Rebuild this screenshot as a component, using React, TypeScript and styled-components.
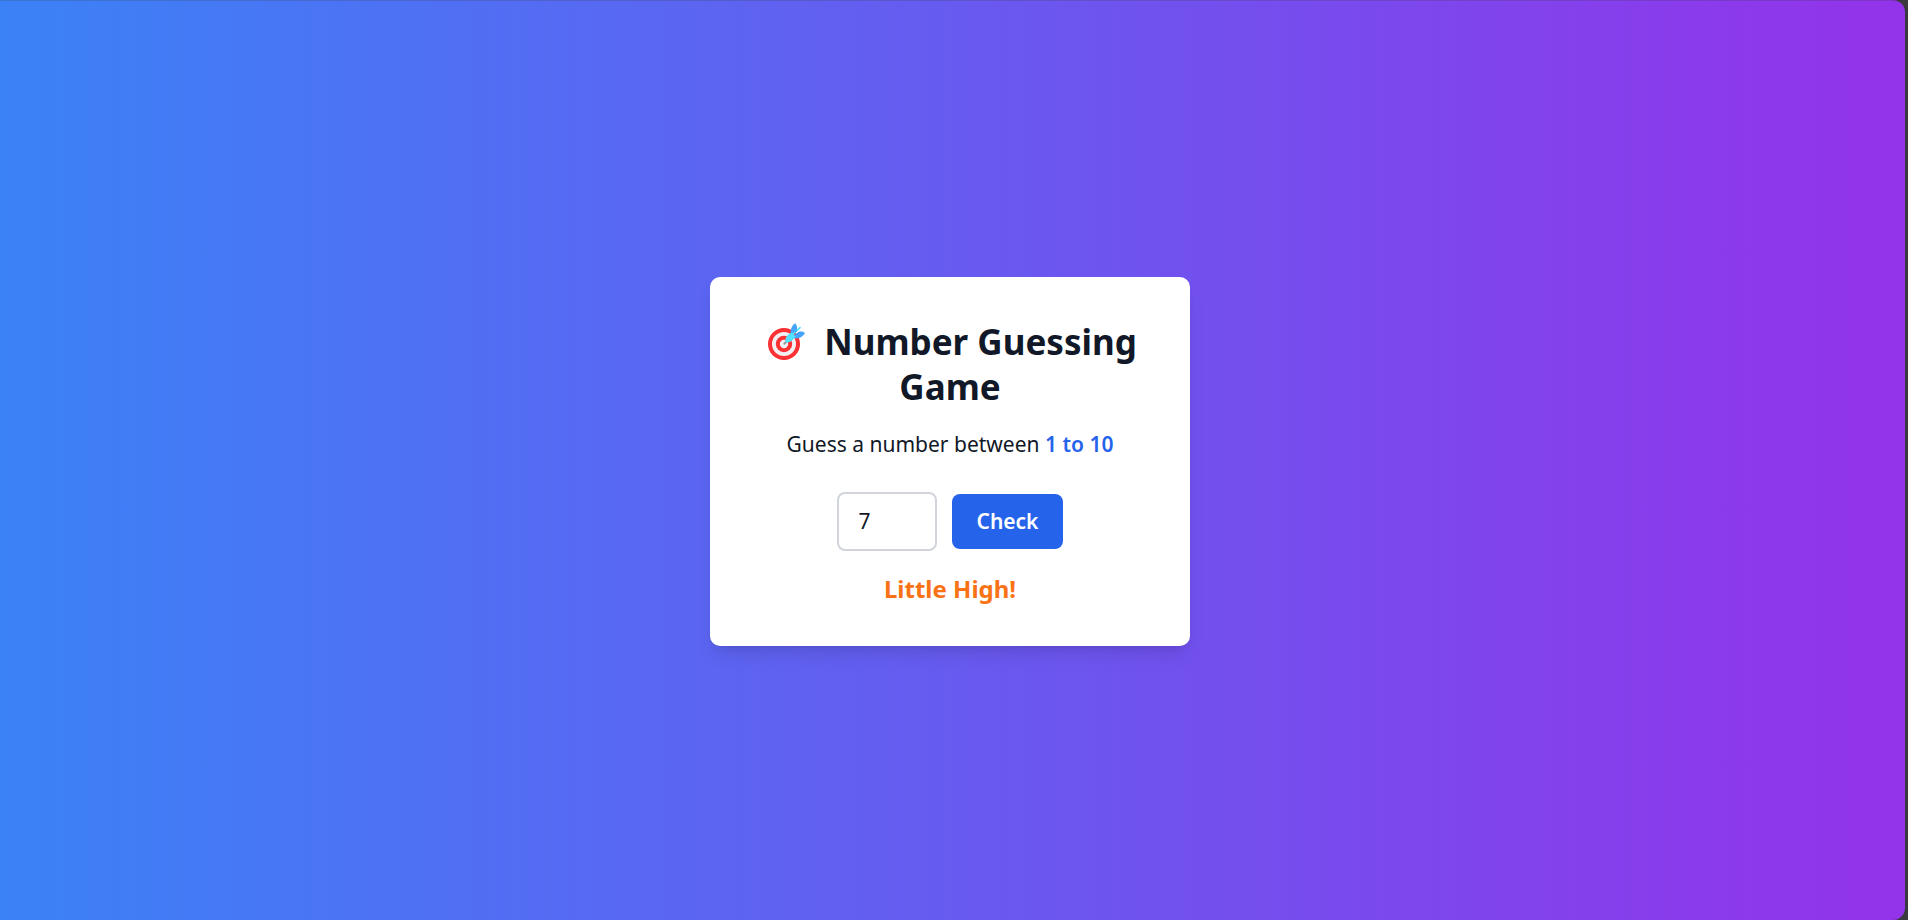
import React, { useState } from "react";
import styled, { createGlobalStyle } from "styled-components";

const GlobalStyle = createGlobalStyle`
  *, *::before, *::after { box-sizing: border-box; }
  body {
    margin: 0;
    background: #3a3a3e;
    color: #111827;
    font-family: "Segoe UI", "Noto Sans", sans-serif;
  }
`;

const Page = styled.main`
  display: flex;
  align-items: center;
  justify-content: center;
  min-height: 100vh;
  margin-right: 3px;
  padding: 1px 5px 0 0;
  border-top: 1px solid rgba(58, 58, 62, 0.2);
  border-radius: 0 12px 12px 0;
  background: linear-gradient(to right, #3b82f6, #9333ea) border-box;
`;

const Card = styled.section`
  width: 480px;
  max-width: 100%;
  padding: 40px;
  border-radius: 10px;
  background: #ffffff;
  text-align: center;
  box-shadow: 0 12px 19px -4px rgba(0, 0, 0, 0.1),
    0 5px 8px -5px rgba(0, 0, 0, 0.1);
`;

const Title = styled.h1`
  margin: 0;
  padding: 2px 0 18px;
  font-size: 35px;
  line-height: 45px;
  font-weight: 700;
`;

const TargetIcon = styled.svg`
  width: 37px;
  height: 37px;
  margin: 0 10px 0 5px;
  vertical-align: -5px;
`;

const Prompt = styled.p`
  margin: 0 0 30px;
  font-size: 21px;
  line-height: 35px;
`;

const Range = styled.span`
  color: #2563eb;
  font-weight: 600;
`;

const GuessForm = styled.form`
  display: flex;
  align-items: center;
  justify-content: center;
  gap: 15px;
  margin-bottom: 20px;
`;

const GuessInput = styled.input`
  width: 100px;
  height: 59px;
  padding: 10px 20px;
  border: 2px solid #d1d5db;
  border-radius: 8px;
  background: #ffffff;
  color: inherit;
  font: inherit;
  font-size: 21px;
  line-height: 35px;
  appearance: textfield;
  &::-webkit-inner-spin-button { display: none; }
`;

const CheckButton = styled.button`
  padding: 10px 25px;
  border: 0;
  border-radius: 8px;
  background: #2563eb;
  color: #ffffff;
  font: inherit;
  font-size: 21px;
  line-height: 35px;
  font-weight: 600;
  cursor: pointer;
`;

const Message = styled.p`
  margin: 0;
  color: #f97316;
  font-size: 24px;
  line-height: 35px;
  font-weight: 700;
`;

function Target() {
  return (
    <TargetIcon viewBox="0 0 37 37" aria-hidden="true">
      <circle cx="16" cy="21" r="16" fill="#fc3133" />
      <circle cx="16" cy="21" r="12" fill="#f2f0f3" />
      <circle cx="16" cy="21" r="8.2" fill="#fc3133" />
      <circle cx="16" cy="21" r="4.2" fill="#f2f0f3" />
      <path d="M16.5 20.5 19.5 17.5" stroke="#9a949f" strokeWidth="2.2" strokeLinecap="round" />
      <path d="M22.6 11.5C22.2 6.6 23.5 3 26.9 0.3C28.5 1.5 29.2 3.2 29 6.2L24.8 12Z" fill="#46a4fb" />
      <path d="M25.5 14.8C29 16.3 33.7 15 37 10.2C35.5 8.5 33.6 8 31 8.7L25.7 12.5Z" fill="#46a4fb" />
      <path d="M17.4 19.2C16.7 16.4 18 13.7 20.4 11.6L23.4 9.5L27.6 13.4L25 16.5C22.9 18.8 20.3 20.2 17.4 19.2Z" fill="#50e2ff" />
      <path d="M23.5 12.5 32 4.7" stroke="#50e2ff" strokeWidth="1.8" strokeLinecap="round" />
      <path d="M27 9.3 28.8 7.6M29 11.5 31 9.5" stroke="#2d86e8" strokeWidth="1" strokeLinecap="round" />
    </TargetIcon>
  );
}

const SECRET: number = 5;

function hintFor(guess: number) {
  if (guess === SECRET) return "Correct!";
  return guess > SECRET ? "Little High!" : "Little Low!";
}

export default function App() {
  const [guess, setGuess] = useState("7");
  const [message, setMessage] = useState("Little High!");

  const check = (event: React.FormEvent) => {
    event.preventDefault();
    setMessage(hintFor(Number(guess)));
  };

  return (
    <>
      <GlobalStyle />
      <Page>
        <Card>
          <Title>
            <Target /> Number Guessing Game
          </Title>
          <Prompt>
            Guess a number between <Range>1 to 10</Range>
          </Prompt>
          <GuessForm onSubmit={check}>
            <GuessInput
              type="number"
              min={1}
              max={10}
              aria-label="Your guess"
              value={guess}
              onChange={(event) => setGuess(event.target.value)}
            />
            <CheckButton type="submit">Check</CheckButton>
          </GuessForm>
          <Message role="status">{message}</Message>
        </Card>
      </Page>
    </>
  );
}
